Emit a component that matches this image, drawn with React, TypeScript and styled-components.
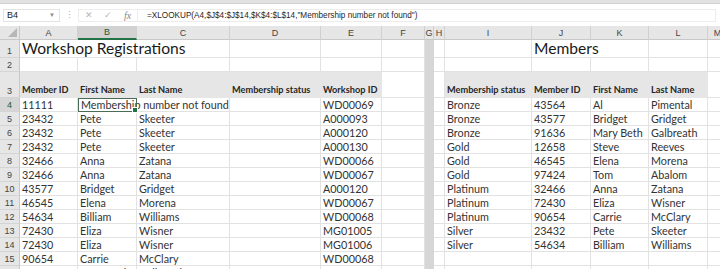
import React from 'react'
import styled, { createGlobalStyle, css } from 'styled-components'

const GlobalStyle = createGlobalStyle`
  html, body {
    margin: 0;
    padding: 0;
    background: #ffffff;
    overflow: hidden;
  }
  * {
    box-sizing: border-box;
  }
`

const Window = styled.div`
  width: 720px;
  height: 269px;
  overflow: hidden;
  background: #ffffff;
  font-family: Lato, 'Open Sans', sans-serif;
  color: #333333;
`

const RibbonEdge = styled.div`
  height: 4px;
  background: #e1e1e1;
  border-bottom: 1px solid #d2d2d2;
`

const FormulaBar = styled.div`
  height: 22px;
  display: flex;
  align-items: center;
  padding: 0 4px 0 3px;
  background: #ffffff;
  font-family: 'Liberation Sans', Arial, sans-serif;
  font-size: 9px;
`

const NameBox = styled.div`
  width: 57px;
  height: 13px;
  display: flex;
  align-items: center;
  justify-content: space-between;
  padding: 0 4px 0 3px;
  border: 1px solid #e3e3e3;
  color: #222222;
`

const Caret = styled.span`
  color: #8a8a8a;
  font-size: 6px;
`

const Grip = styled.div`
  width: 18px;
  text-align: center;
  color: #b5b5b5;
  font-size: 9px;
`

const IconGroup = styled.div`
  width: 59px;
  height: 13px;
  display: flex;
  align-items: center;
  justify-content: space-around;
  color: #b8b8b8;
  border: 1px solid #ececec;
  border-right: none;
`

const Fx = styled.span`
  font-family: 'Liberation Serif', serif;
  font-style: italic;
  color: #8a8a8a;
  font-size: 10px;
`

const FormulaInput = styled.div`
  flex: 1;
  height: 13px;
  display: flex;
  align-items: center;
  padding-left: 9px;
  color: #1f1f1f;
  border: 1px solid #ececec;
  white-space: nowrap;
  font-size: 8.2px;
`

const Sheet = styled.div`
  display: grid;
  grid-template-columns: 20px 58px 59px 93px 91px 61px 43px 9px 11px 87px 59px 58px 59px 20px;
  grid-template-rows: 14px 18px 14px 26px repeat(13, 14px);
`

const ColHead = styled.div<{ $active?: boolean }>`
  background: #e6e6e6;
  border-right: 1px solid #d0d0d0;
  border-bottom: 1px solid #c8c8c8;
  font-family: 'Liberation Sans', Arial, sans-serif;
  font-size: 9px;
  color: #444444;
  display: flex;
  align-items: center;
  justify-content: center;
  ${(p) =>
    p.$active &&
    css`
      background: #d2d2d2;
      color: #1e5c36;
      border-bottom: 2px solid #217346;
    `}
`

const Corner = styled.div`
  background: #e6e6e6;
  border-right: 1px solid #c8c8c8;
  border-bottom: 1px solid #c8c8c8;
  position: relative;
  &::after {
    content: '';
    position: absolute;
    right: 2px;
    bottom: 2px;
    border-left: 9px solid transparent;
    border-bottom: 9px solid #b7b7b7;
  }
`

const RowHead = styled.div<{ $active?: boolean }>`
  background: #e6e6e6;
  border-right: 1px solid #c8c8c8;
  border-bottom: 1px solid #d4d4d4;
  font-family: 'Liberation Sans', Arial, sans-serif;
  font-size: 9px;
  color: #444444;
  display: flex;
  align-items: flex-end;
  justify-content: center;
  padding-bottom: 1px;
  ${(p) =>
    p.$active &&
    css`
      background: #d6d6d6;
      color: #1e5c36;
    `}
`

const Cell = styled.div<{
  $span?: number
  $fill?: boolean
  $bold?: boolean
  $title?: boolean
  $gutter?: boolean
  $selected?: boolean
}>`
  grid-column: span ${(p) => p.$span ?? 1};
  position: relative;
  border-right: 1px solid #e2e2e2;
  border-bottom: 1px solid #e2e2e2;
  padding: 0 2px 0 2px;
  font-size: 10.8px;
  line-height: 13px;
  white-space: nowrap;
  display: flex;
  align-items: flex-end;
  min-width: 0;
  ${(p) =>
    p.$fill &&
    css`
      background: #e7e6e6;
      border-color: #e7e6e6;
      padding-bottom: 1px;
    `}
  ${(p) =>
    p.$bold &&
    css`
      font-weight: 700;
      font-size: 9.2px;
      color: #262626;
    `}
  ${(p) =>
    p.$title &&
    css`
      font-size: 15.6px;
      line-height: 18px;
      color: #1a1a1a;
      padding-left: 2px;
    `}
  ${(p) =>
    p.$gutter &&
    css`
      background: #d6d6d6;
      border-color: #d6d6d6;
    `}
  ${(p) =>
    p.$selected &&
    css`
      z-index: 2;
      padding-left: 3px;
      outline: 1px solid #4a6b57;
      outline-offset: -1px;
      &::after {
        content: '';
        position: absolute;
        right: -2px;
        bottom: -2px;
        width: 4px;
        height: 4px;
        background: #217346;
        border: 1px solid #ffffff;
      }
    `}
`

const Overflow = styled.span`
  overflow: visible;
`

const columns = ['A', 'B', 'C', 'D', 'E', 'F', 'G', 'H', 'I', 'J', 'K', 'L', 'M']

const registrations: string[][] = [
  ['11111', '', '', '', 'WD00069'],
  ['23432', 'Pete', 'Skeeter', '', 'A000093'],
  ['23432', 'Pete', 'Skeeter', '', 'A000120'],
  ['23432', 'Pete', 'Skeeter', '', 'A000130'],
  ['32466', 'Anna', 'Zatana', '', 'WD00066'],
  ['32466', 'Anna', 'Zatana', '', 'WD00067'],
  ['43577', 'Bridget', 'Gridget', '', 'A000120'],
  ['46545', 'Elena', 'Morena', '', 'WD00067'],
  ['54634', 'Billiam', 'Williams', '', 'WD00068'],
  ['72430', 'Eliza', 'Wisner', '', 'MG01005'],
  ['72430', 'Eliza', 'Wisner', '', 'MG01006'],
  ['90654', 'Carrie', 'McClary', '', 'WD00068'],
  ['91636', 'Mary Beth', 'Galbreath', '', 'MG01005'],
]

const members: string[][] = [
  ['Bronze', '43564', 'Al', 'Pimental'],
  ['Bronze', '43577', 'Bridget', 'Gridget'],
  ['Bronze', '91636', 'Mary Beth', 'Galbreath'],
  ['Gold', '12658', 'Steve', 'Reeves'],
  ['Gold', '46545', 'Elena', 'Morena'],
  ['Gold', '97424', 'Tom', 'Abalom'],
  ['Platinum', '32466', 'Anna', 'Zatana'],
  ['Platinum', '72430', 'Eliza', 'Wisner'],
  ['Platinum', '90654', 'Carrie', 'McClary'],
  ['Silver', '23432', 'Pete', 'Skeeter'],
  ['Silver', '54634', 'Billiam', 'Williams'],
  ['', '', '', ''],
  ['', '', '', ''],
]

const leftHeads = ['Member ID', 'First Name', 'Last Name', 'Membership status', 'Workshop ID']
const rightHeads = ['Membership status', 'Member ID', 'First Name', 'Last Name']

const App: React.FC = () => {
  return (
    <Window>
      <GlobalStyle />
      <RibbonEdge />
      <FormulaBar>
        <NameBox>
          <span>B4</span>
          <Caret>▼</Caret>
        </NameBox>
        <Grip>⋮</Grip>
        <IconGroup>
          <span>✕</span>
          <span>✓</span>
          <Fx>fx</Fx>
        </IconGroup>
        <FormulaInput>
          =XLOOKUP(A4,$J$4:$J$14,$K$4:$L$14,"Membership number not found")
        </FormulaInput>
      </FormulaBar>

      <Sheet>
        <Corner />
        {columns.map((c) => (
          <ColHead key={c} $active={c === 'B'}>
            {c}
          </ColHead>
        ))}

        {/* row 1 */}
        <RowHead>1</RowHead>
        <Cell $span={3} $title>
          Workshop Registrations
        </Cell>
        <Cell />
        <Cell />
        <Cell />
        <Cell $gutter />
        <Cell />
        <Cell />
        <Cell $span={2} $title>
          Members
        </Cell>
        <Cell />
        <Cell />

        {/* row 2 */}
        <RowHead>2</RowHead>
        {columns.map((c) => (
          <Cell key={c} $gutter={c === 'G'} />
        ))}

        {/* row 3 */}
        <RowHead>3</RowHead>
        {leftHeads.map((h) => (
          <Cell key={h} $fill $bold>
            {h}
          </Cell>
        ))}
        <Cell />
        <Cell $gutter />
        <Cell />
        {rightHeads.map((h) => (
          <Cell key={'r' + h} $fill $bold>
            {h}
          </Cell>
        ))}
        <Cell />

        {registrations.map((row, i) => {
          const n = i + 4
          const m = members[i]
          return (
            <React.Fragment key={n}>
              <RowHead $active={n === 4}>{n}</RowHead>
              <Cell>{row[0]}</Cell>
              {n === 4 ? (
                <Cell $selected>
                  <Overflow>Membership number not found</Overflow>
                </Cell>
              ) : (
                <Cell>{row[1]}</Cell>
              )}
              <Cell>{row[2]}</Cell>
              <Cell>{row[3]}</Cell>
              <Cell>{row[4]}</Cell>
              <Cell />
              <Cell $gutter />
              <Cell />
              <Cell>{m[0]}</Cell>
              <Cell>{m[1]}</Cell>
              <Cell>{m[2]}</Cell>
              <Cell>{m[3]}</Cell>
              <Cell />
            </React.Fragment>
          )
        })}
      </Sheet>
    </Window>
  )
}

export default App
